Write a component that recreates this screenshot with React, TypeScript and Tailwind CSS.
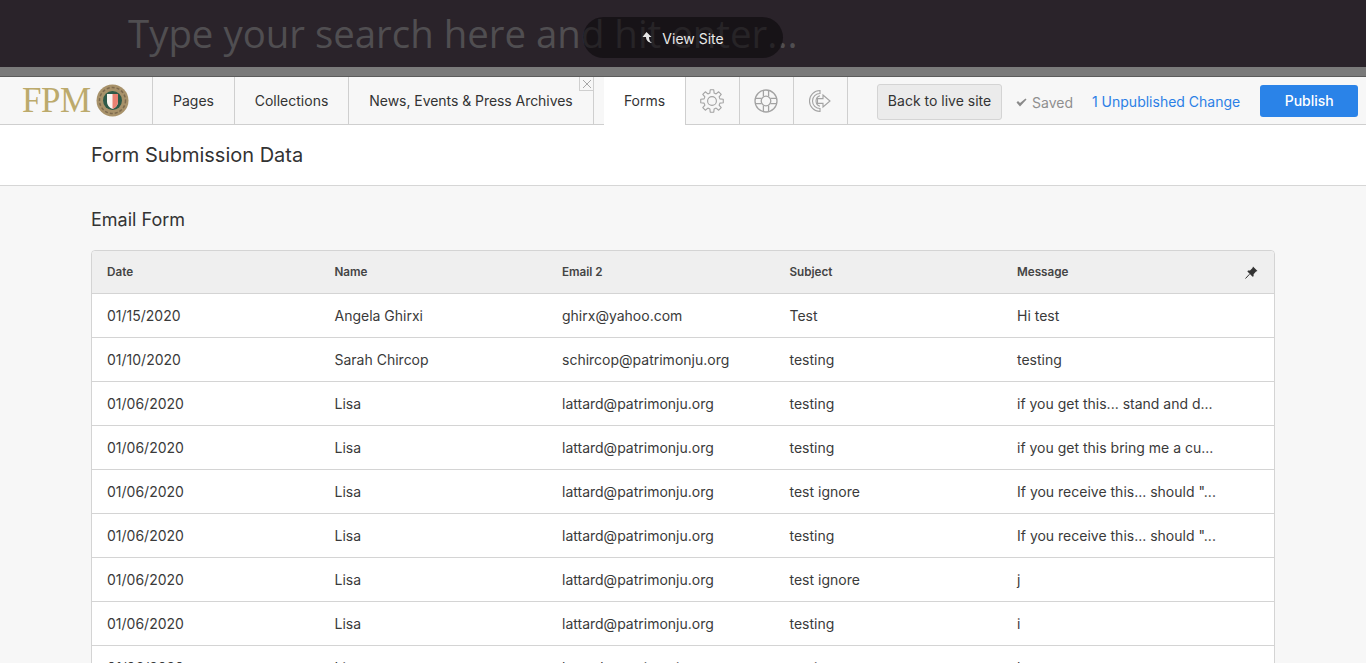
const rows = [
  ['01/15/2020', 'Angela Ghirxi', 'ghirx@yahoo.com', 'Test', 'Hi test'],
  ['01/10/2020', 'Sarah Chircop', 'schircop@patrimonju.org', 'testing', 'testing'],
  ['01/06/2020', 'Lisa', 'lattard@patrimonju.org', 'testing', 'if you get this... stand and d...'],
  ['01/06/2020', 'Lisa', 'lattard@patrimonju.org', 'testing', 'if you get this bring me a cu...'],
  ['01/06/2020', 'Lisa', 'lattard@patrimonju.org', 'test ignore', 'If you receive this... should "...'],
  ['01/06/2020', 'Lisa', 'lattard@patrimonju.org', 'testing', 'If you receive this... should "...'],
  ['01/06/2020', 'Lisa', 'lattard@patrimonju.org', 'test ignore', 'j'],
  ['01/06/2020', 'Lisa', 'lattard@patrimonju.org', 'testing', 'i'],
  ['01/06/2020', 'Lisa', 'lattard@patrimonju.org', 'testing', 'h'],
]

// outline of an 8 tooth cog
function gearPath() {
  const pt = (deg: number, r: number) => {
    const a = (deg * Math.PI) / 180
    return `${(12 + r * Math.cos(a)).toFixed(2)} ${(12 + r * Math.sin(a)).toFixed(2)}`
  }
  let d = ''
  for (let i = 0; i < 8; i++) {
    const a = i * 45 - 90
    d += `${i === 0 ? 'M' : 'L'}${pt(a - 15, 8.2)} L${pt(a - 9, 11.4)} L${pt(a + 9, 11.4)} L${pt(a + 15, 8.2)} `
  }
  return d + 'Z'
}

function GearIcon() {
  return (
    <svg width="24" height="24" viewBox="0 0 24 24" fill="none" stroke="#a3a3a3" strokeWidth="1.1" strokeLinejoin="round">
      <circle cx="12" cy="12" r="4.4" />
      <path d={gearPath()} />
    </svg>
  )
}

function RingIcon() {
  return (
    <svg width="24" height="24" viewBox="0 0 24 24" fill="none" stroke="#a3a3a3" strokeWidth="1.3">
      <circle cx="12" cy="12" r="11" />
      <circle cx="12" cy="12" r="4.8" />
      <path d="M9.4 1.4 V7.6 M14.6 1.4 V7.6 M9.4 16.4 V22.6 M14.6 16.4 V22.6 M1.4 9.4 H7.6 M1.4 14.6 H7.6 M16.4 9.4 H22.6 M16.4 14.6 H22.6" />
    </svg>
  )
}

function LogoutIcon() {
  return (
    <svg width="26" height="24" viewBox="0 0 26 24" fill="none" stroke="#a3a3a3" strokeWidth="1.1">
      <path d="M13 1.5 A10.5 10.5 0 1 0 13 22.5 V19.5 A7.5 7.5 0 1 1 13 4.5 Z" />
      <path d="M13 6.8 A5.4 5.4 0 0 0 13 17.2" />
      <path d="M10.5 9.6 H16 V6 L23 12 L16 18 V14.4 H10.5 Z" fill="#f7f7f7" />
    </svg>
  )
}

function Crest() {
  return (
    <svg width="33" height="33" viewBox="0 0 33 33">
      <circle cx="16.5" cy="16.5" r="16" fill="#a8926a" />
      <circle cx="16.5" cy="16.5" r="13" fill="none" stroke="#7d6a4e" strokeWidth="1.5" strokeDasharray="3 2" />
      <circle cx="16.5" cy="16.5" r="9.5" fill="#2e5a48" />
      <path d="M11 10 H22 V18 Q22 22.5 16.5 25 Q11 22.5 11 18 Z" fill="#fbf6f2" />
      <path d="M16.5 10 H22 V18 Q22 22.5 16.5 25 Z" fill="#ea8172" />
    </svg>
  )
}

export default function App() {
  return (
    <div className="h-[663px] overflow-hidden bg-[#f7f7f7] text-[#333] font-['Inter',sans-serif]">
      {/* search strip */}
      <div className="relative h-[67px] bg-[#2a232a] pl-[128px] pt-[6px]">
        <div className="font-['Open_Sans',sans-serif] text-[38.4px] leading-[54px] text-[#504e51]">
          Type your search here and hit enter...
        </div>
        <div className="absolute left-[583px] top-[17px] flex h-[41px] w-[200px] items-center justify-center gap-[10px] rounded-[21px] bg-[#0c090c]/60">
          <svg width="10" height="11" viewBox="0 0 10 11" fill="#e6e6e6">
            <path d="M4.5 0 L9.5 5 L7 5 C7 8 8 10 10 11 C6 10.5 4 8 4 5 L0.5 5 Z" />
          </svg>
          <span className="pt-[2px] text-[14px] text-[#e8e8e8]">View Site</span>
        </div>
      </div>
      <div className="h-[10px] border-b border-[#5c5c5c] bg-[#7a7a7a]" />

      {/* nav */}
      <div className="flex h-[48px] items-stretch border-b border-[#cfcfcf] bg-[#f7f7f7] text-[14px]">
        <div className="flex w-[153px] items-center gap-[5px] border-r border-[#cfcfcf] pl-[22px]">
          <span className="font-['Liberation_Serif',serif] text-[35px] leading-none tracking-[-0.5px] text-[#bcaa6c]">FPM</span>
          <Crest />
        </div>
        <div className="flex w-[82px] items-center justify-center border-r border-[#cfcfcf]">Pages</div>
        <div className="flex w-[114px] items-center justify-center border-r border-[#cfcfcf]">Collections</div>
        <div className="relative flex w-[245px] items-center justify-center border-r border-[#cfcfcf]">
          <span className="tracking-[-0.05px]">News, Events &amp; Press Archives</span>
          <div className="absolute right-0 top-0 flex h-[14px] w-[14px] items-center justify-center border-b border-l border-[#cfcfcf]">
            <svg width="10" height="10" viewBox="0 0 10 10" stroke="#a8a8a8" strokeWidth="1">
              <path d="M1 1 L9 9 M9 1 L1 9" />
            </svg>
          </div>
        </div>
        <div className="ml-[10px] -mb-px flex w-[82px] items-center justify-center border-r border-[#cfcfcf] bg-white pb-[1px]">Forms</div>
        <div className="flex w-[54px] items-center justify-center border-r border-[#cfcfcf] pr-[2px]"><GearIcon /></div>
        <div className="flex w-[54px] items-center justify-center border-r border-[#cfcfcf] pr-[2px]"><RingIcon /></div>
        <div className="flex w-[54px] items-center justify-center border-r border-[#cfcfcf] pr-[2px]"><LogoutIcon /></div>
        <div className="ml-[29px] mt-[7px] flex h-[36px] w-[125px] items-center justify-center rounded-[3px] border border-[#d4d4d4] bg-[#ebebeb] pb-[3px]">
          Back to live site
        </div>
        <div className="ml-[14px] flex items-center gap-[5px] pt-[3px] text-[#8f8f8f]">
          <svg width="11" height="9" viewBox="0 0 11 9" fill="#8a8a8a">
            <path d="M0.5 4.5 L2 3 L4 5 L9.5 0.5 L10.5 1.5 L4 8.5 Z" />
          </svg>
          Saved
        </div>
        <div className="ml-[19px] flex items-center pt-px text-[#2b80e6]">1 Unpublished Change</div>
        <div className="ml-[20px] mt-[8px] flex h-[32px] w-[98px] items-center justify-center rounded-[3px] bg-[#2a83e8] pb-[1px] font-medium text-white">
          Publish
        </div>
      </div>

      <div className="flex h-[61px] items-center border-b border-[#d6d6d6] bg-white pb-[1px] pl-[91px] text-[20px] text-[#333]">
        Form Submission Data
      </div>

      <div className="px-[91px] pt-[23px]">
        <h2 className="text-[18px] leading-[22px] text-[#333]">Email Form</h2>
        <div className="mt-[19px] rounded-t-[4px] border border-[#d4d4d4] bg-white text-[14px]">
          <div className="relative grid h-[43px] grid-cols-[repeat(5,227.5px)] items-center rounded-t-[4px] border-b border-[#d4d4d4] bg-[#efefef] pt-[2px] text-[11.7px] font-semibold text-[#444]">
            <div className="pl-[15px]">Date</div>
            <div className="pl-[15px]">Name</div>
            <div className="pl-[15px]">Email 2</div>
            <div className="pl-[15px]">Subject</div>
            <div className="pl-[15px]">Message</div>
            <svg className="absolute right-[16px] top-[15px]" width="13" height="13" viewBox="0 0 13 13" fill="#333">
              <path d="M8 0.5 L12.5 5 L11 5.6 L8.6 8.2 L8.6 10.2 L7.6 10.8 L2.4 5.6 L3 4.6 L5 4.6 L7.5 2 Z" />
              <path d="M4.5 8.2 L0.5 12.5" stroke="#333" strokeWidth="1" />
            </svg>
          </div>
          {rows.map((r, i) => (
            <div key={i} className="grid h-[44px] grid-cols-[repeat(5,227.5px)] items-center border-b border-[#d4d4d4]">
              {r.map((c, j) => (
                <div key={j} className="truncate pl-[15px] text-[#3a3a3a]">{c}</div>
              ))}
            </div>
          ))}
        </div>
      </div>
    </div>
  )
}
